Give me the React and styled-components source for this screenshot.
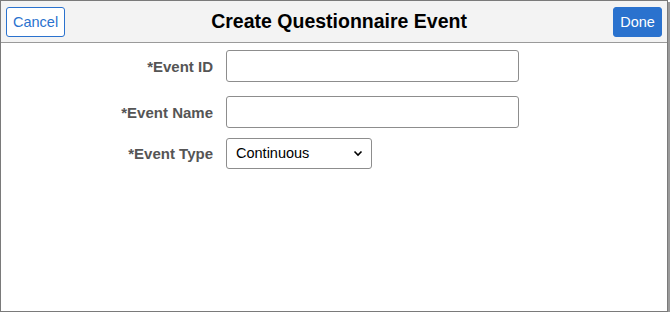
import React from "react";
import styled, { createGlobalStyle } from "styled-components";

const GlobalStyle = createGlobalStyle`
  body {
    margin: 0;
    background: #ffffff;
    font-family: "Liberation Sans", Arial, sans-serif;
  }
`;

// dialog frame with a small drop shadow
const Frame = styled.div`
  box-sizing: border-box;
  width: 668px;
  height: 312px;
  border: 1px solid #7a7a7a;
  background: #fff;
  box-shadow: 2px 2px 0 #9a9a9a;
  display: flex;
  flex-direction: column;
`;

const Header = styled.div`
  box-sizing: border-box;
  height: 42px;
  background: #f3f3f3;
  border-bottom: 1px solid #9a9a9a;
  display: flex;
  align-items: center;
  justify-content: space-between;
  padding: 0 5px 0 5px;
`;

const Title = styled.h1`
  margin: 0;
  font-size: 19.5px;
  font-weight: bold;
  color: #000;
  flex: 1;
  text-align: center;
`;

const Button = styled.button`
  box-sizing: border-box;
  height: 30px;
  padding: 0 6px;
  border-radius: 3px;
  font-family: "Liberation Sans", Arial, sans-serif;
  font-size: 14.5px;
  border: 1px solid #2a72ce;
  color: ${(p) => (p.primary ? "#fff" : "#2a72ce")};
  background: ${(p) => (p.primary ? "#2a72ce" : "#fff")};
  min-width: ${(p) => p.minW || "auto"};
`;

const Form = styled.div`
  display: grid;
  grid-template-columns: 212px auto;
  column-gap: 13px;
  row-gap: 0;
  align-items: center;
`;

const Label = styled.label`
  text-align: right;
  font-size: 15px;
  font-weight: bold;
  color: #555;
`;

const Row = styled.div`
  display: flex;
  align-items: center;
  height: ${(p) => p.h}px;
`;

const Input = styled.input`
  box-sizing: border-box;
  width: 293px;
  height: 32px;
  border: 1px solid #8d8d8d;
  border-radius: 3px;
  background: #fff;
  font-size: 14px;
`;

const SelectBox = styled.div`
  box-sizing: border-box;
  width: 146px;
  height: 31px;
  border: 1px solid #8d8d8d;
  border-radius: 3px;
  display: flex;
  align-items: center;
  justify-content: space-between;
  padding: 0 8px 0 9px;
  font-size: 14.5px;
  color: #000;
`;

const fields = [
  { label: "*Event ID", h: 46 },
  { label: "*Event Name", h: 46 },
];

export default function App() {
  return (
    <>
      <GlobalStyle />
      <Frame>
        <Header>
          <Button minW="59px">Cancel</Button>
          <Title>Create Questionnaire Event</Title>
          <Button primary minW="49px">
            Done
          </Button>
        </Header>
        <Form>
          {fields.map((f) => (
            <React.Fragment key={f.label}>
              <Label>{f.label}</Label>
              <Row h={f.h}>
                <Input />
              </Row>
            </React.Fragment>
          ))}
          <Label>*Event Type</Label>
          <Row h={36}>
            <SelectBox>
              <span>Continuous</span>
              <svg width="10" height="7" viewBox="0 0 10 7">
                <path d="M1.5 1.5 L5 5 L8.5 1.5" fill="none" stroke="#000" strokeWidth="1.6" />
              </svg>
            </SelectBox>
          </Row>
        </Form>
      </Frame>
    </>
  );
}
